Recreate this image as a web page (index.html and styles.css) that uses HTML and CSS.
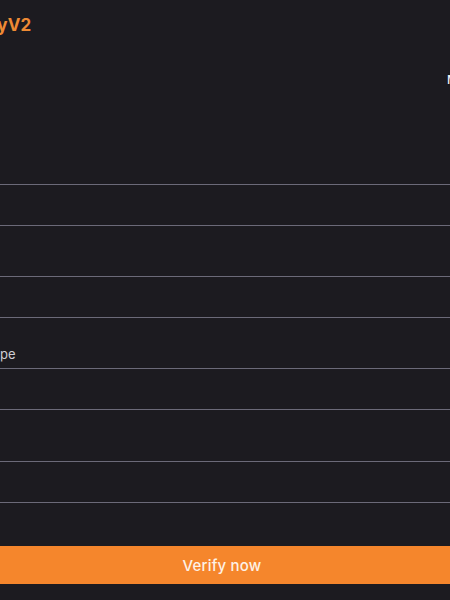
FILE: index.html
```html
<!DOCTYPE html>
<html>
<head>
<meta charset="utf-8">
<link rel="stylesheet" href="styles.css">
</head>
<body>
<div class="page">
  <header class="top">
    <h1 class="brand">VerifyV2</h1>
  </header>
  <div class="sub">
    <span class="mode">Manual</span>
  </div>
  <form class="form">
    <div class="field">
      <label class="label">Name</label>
      <div class="input"></div>
    </div>
    <div class="field">
      <label class="label">Email</label>
      <div class="input"></div>
    </div>
    <div class="field">
      <label class="label label-shift">Card Type</label>
      <div class="input"></div>
    </div>
    <div class="field">
      <label class="label">Phone</label>
      <div class="input"></div>
    </div>
    <button type="button" class="btn">Verify now</button>
  </form>
</div>
</body>
</html>
```

FILE: styles.css
```css
html, body {
  margin: 0;
  padding: 0;
  background: #1c1b20;
  overflow: hidden;
  height: 600px;
}
body {
  font-family: Inter, "Open Sans", sans-serif;
  color: #d6d5db;
}
.page {
  margin-left: -44px;
  width: 532px;
  padding-top: 14px;
}
.top {
  height: 22px;
  display: flex;
  align-items: center;
}
.brand {
  margin: 0;
  font-size: 17px;
  font-weight: 700;
  color: #ee8a34;
  letter-spacing: 0.2px;
}
.sub {
  margin-top: 36px;
  height: 16px;
  display: flex;
  justify-content: flex-end;
}
.mode {
  font-size: 12px;
  color: #f2f2f4;
  font-weight: 500;
  width: 41px;
}
.form {
  margin-top: 73px;
  display: flex;
  flex-direction: column;
}
.field {
  display: flex;
  flex-direction: column;
  margin-bottom: 27px;
}
.field:nth-child(3) {
  margin-bottom: 28px;
}
.label {
  font-size: 13px;
  line-height: 18px;
  height: 18px;
  margin-bottom: 5px;
  color: #cfced4;
}
.label-shift {
  text-indent: -4px;
}
.input {
  height: 40px;
  border: 1px solid #6b6a78;
  border-radius: 4px;
}
.btn {
  margin-top: 16px;
  height: 38px;
  border: none;
  border-radius: 4px;
  background: #f5862c;
  color: #fdf1e6;
  font-family: Inter, sans-serif;
  font-size: 15px;
  font-weight: 500;
  letter-spacing: 0.2px;
  width: 100%;
}
```
